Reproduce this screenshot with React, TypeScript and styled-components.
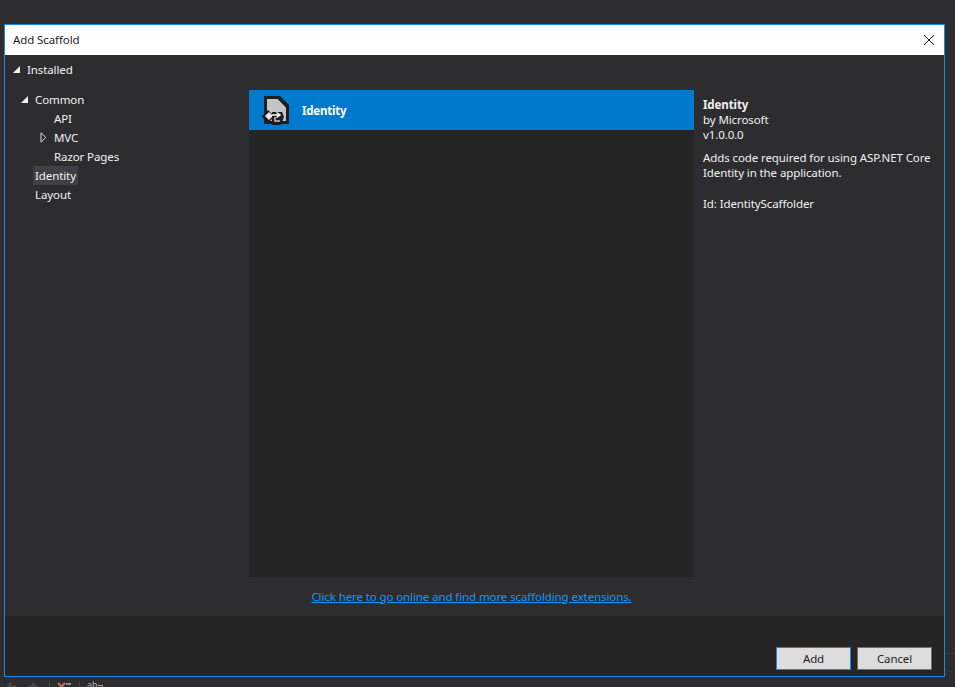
import React from "react";
import styled, { createGlobalStyle } from "styled-components";

const GlobalStyle = createGlobalStyle`
  html, body {
    margin: 0;
    padding: 0;
    width: 955px;
    height: 687px;
    overflow: hidden;
    background: #2d2d30;
    font-family: "Noto Sans", "Open Sans", sans-serif;
    font-size: 11.5px;
    letter-spacing: -0.1px;
  }
`;

const Page = styled.div`
  width: 955px;
  height: 687px;
  display: flex;
  flex-direction: column;
  padding: 24px 0 0 4px;
  box-sizing: border-box;
`;

const TopRow = styled.div`
  display: flex;
  flex: none;
`;

const Dialog = styled.div`
  width: 941px;
  height: 653px;
  flex: none;
  box-sizing: border-box;
  border: 1px solid #1a86e8;
  display: flex;
  flex-direction: column;
  background: #2d2d30;
`;

const SideRail = styled.div`
  flex: 1;
  padding-top: 629px;
`;

const RailLine = styled.div`
  height: 1px;
  background: #3a3a3d;
  margin-bottom: 9px;
`;

const TitleBar = styled.div`
  height: 30px;
  flex: none;
  box-sizing: border-box;
  background: #ffffff;
  color: #1e1e1e;
  display: flex;
  align-items: center;
  justify-content: space-between;
  padding: 0 10px 1px 8px;
`;

const CloseButton = styled.button`
  width: 10px;
  height: 10px;
  padding: 0;
  border: 0;
  background: none;
  display: flex;
`;

const Body = styled.div`
  height: 561px;
  flex: none;
  display: grid;
  grid-template-columns: 244px 445px 1fr;
  grid-template-rows: 1fr 39px;
`;

const TreePane = styled.div`
  grid-row: 1 / 3;
  color: #f1f1f1;
  display: flex;
  flex-direction: column;
  padding-top: 5px;
`;

const TreeRow = styled.div<{ $indent: number }>`
  height: 19px;
  line-height: 19px;
  display: flex;
  align-items: center;
  padding-left: ${(p) => p.$indent}px;
  flex: none;
`;

const RootRow = styled(TreeRow)`
  margin-bottom: 11px;
`;

const Arrow = styled.svg<{ $wide?: boolean }>`
  width: 7px;
  height: ${(p) => (p.$wide ? 11 : 7)}px;
  flex: none;
  margin-right: 7px;
`;

const TreeLabel = styled.span<{ $selected?: boolean }>`
  padding: 0 2px;
  margin-left: -2px;
  background: ${(p) => (p.$selected ? "#3f3f46" : "transparent")};
`;

const ListPane = styled.div`
  margin-top: 35px;
  background: #252526;
`;

const ListItem = styled.div`
  height: 40px;
  background: #007acc;
  color: #ffffff;
  font-weight: 700;
  letter-spacing: -0.2px;
  display: flex;
  align-items: center;
  gap: 12px;
  padding-left: 12px;
`;

const DetailPane = styled.div`
  grid-row: 1 / 3;
  padding: 42px 8px 0 9px;
  color: #f1f1f1;
  line-height: 15px;
`;

const DetailName = styled.div`
  font-weight: 700;
`;

const DetailText = styled.p`
  margin: 8px 0 16px;
`;

const LinkRow = styled.div`
  grid-column: 2;
  grid-row: 2;
  display: flex;
  align-items: center;
  justify-content: center;
  padding-bottom: 1px;
`;

const OnlineLink = styled.a`
  color: #0e97ff;
  text-decoration: underline;
`;

const Footer = styled.div`
  flex: 1;
  background: #252526;
  display: flex;
  justify-content: flex-end;
  align-items: flex-end;
  gap: 6px;
  padding: 0 12px 6px 0;
`;

const ActionButton = styled.button<{ $primary?: boolean }>`
  width: 75px;
  height: 23px;
  box-sizing: border-box;
  background: #dddddd;
  color: #1e1e1e;
  border: 1px solid ${(p) => (p.$primary ? "#1a86e8" : "#707070")};
  font: inherit;
  letter-spacing: inherit;
  padding: 0;
`;

const StatusBar = styled.div`
  flex: 1;
  background: #2d2d30;
  display: flex;
  align-items: flex-start;
  padding: 4px 0 0 2px;
  overflow: hidden;
`;

const Faint = styled.svg<{ $gap: number }>`
  flex: none;
  margin-right: ${(p) => p.$gap}px;
`;

const BarLabel = styled.span`
  color: #b0b0b0;
  font-size: 9px;
  line-height: 6px;
  margin: 0 1px 0 7px;
`;

const OpenArrow = () => (
  <Arrow viewBox="0 0 7 7">
    <path d="M7 0V7H0Z" fill="#f1f1f1" />
  </Arrow>
);

const ClosedArrow = () => (
  <Arrow $wide viewBox="0 0 7 11">
    <path d="M1 .8L5.800 5.500 1 10.200Z" fill="none" stroke="#d8d8d8" />
  </Arrow>
);

const ScaffoldIcon = () => (
  <svg width="29" height="31" viewBox="0 0 29 31">
    <path d="M3 1H19L28 10V29H3Z" fill="#1e1e1e" />
    <path d="M6 4H17.500L25 11.500V26H6Z" fill="#c4c4c4" />
    <path d="M17 3L26 12" fill="none" stroke="#1e1e1e" strokeWidth="2" />
    <path d="M7 15L0.500 21.500 7 28 13.500 21.500Z" fill="#1e1e1e" />
    <path d="M8 17L4 21 8 25 12 21Z" fill="#e8e8e8" />
    <path d="M11 17H21L23 22 20 30H11Z" fill="#1e1e1e" />
    <path d="M11 20H18M15.500 17.500L19 20 15.500 22.500" fill="none" stroke="#ffffff" strokeWidth="1.500" />
    <path d="M14 22V26H19" fill="none" stroke="#c4c4c4" strokeWidth="1.500" />
  </svg>
);

const App = () => (
  <>
    <GlobalStyle />
    <Page>
      <TopRow>
        <Dialog>
          <TitleBar>
            <span>Add Scaffold</span>
            <CloseButton aria-label="Close">
              <svg width="10" height="10" viewBox="0 0 10 10">
                <path d="M0 0L10 10M10 0L0 10" stroke="#1e1e1e" strokeWidth="1" />
              </svg>
            </CloseButton>
          </TitleBar>
          <Body>
            <TreePane>
              <RootRow $indent={8}>
                <OpenArrow />
                <TreeLabel>Installed</TreeLabel>
              </RootRow>
              <TreeRow $indent={16}>
                <OpenArrow />
                <TreeLabel>Common</TreeLabel>
              </TreeRow>
              <TreeRow $indent={49}>API</TreeRow>
              <TreeRow $indent={35}>
                <ClosedArrow />
                <TreeLabel>MVC</TreeLabel>
              </TreeRow>
              <TreeRow $indent={49}>Razor Pages</TreeRow>
              <TreeRow $indent={30}>
                <TreeLabel $selected>Identity</TreeLabel>
              </TreeRow>
              <TreeRow $indent={30}>Layout</TreeRow>
            </TreePane>
            <ListPane>
              <ListItem>
                <ScaffoldIcon />
                <span>Identity</span>
              </ListItem>
            </ListPane>
            <DetailPane>
              <DetailName>Identity</DetailName>
              <div>by Microsoft</div>
              <div>v1.0.0.0</div>
              <DetailText>
                Adds code required for using ASP.NET Core Identity in the application.
              </DetailText>
              <div>Id: IdentityScaffolder</div>
            </DetailPane>
            <LinkRow>
              <OnlineLink href="#">Click here to go online and find more scaffolding extensions.</OnlineLink>
            </LinkRow>
          </Body>
          <Footer>
            <ActionButton $primary>Add</ActionButton>
            <ActionButton>Cancel</ActionButton>
          </Footer>
        </Dialog>
        <SideRail>
          <RailLine />
          <svg width="10" height="6" viewBox="0 0 10 6">
            <path d="M1 0h1v1H1zM5 2h1v1H5zM1 4h1v1H1zM8 0h1v1H8zM8 4h1v1H8z" fill="#47474a" />
          </svg>
        </SideRail>
      </TopRow>
      <StatusBar>
        <Faint $gap={12} width="10" height="9" viewBox="0 0 10 9">
          <path d="M10 4.500H2M5.500 1L2 4.500 5.500 8" fill="none" stroke="#48484a" strokeWidth="2" />
        </Faint>
        <Faint $gap={11} width="10" height="9" viewBox="0 0 10 9">
          <path d="M0 4.500H8M4.500 1L8 4.500 4.500 8" fill="none" stroke="#48484a" strokeWidth="2" />
        </Faint>
        <Faint $gap={0} width="25" height="9" viewBox="0 0 25 9">
          <path d="M.5 0V9" stroke="#48484a" />
          <path d="M9 1L16 8M16 1L9 8" stroke="#d0675a" strokeWidth="2" />
          <path d="M17 2H22M17 6H22" stroke="#a8a8a8" strokeWidth="1.500" />
        </Faint>
        <Faint $gap={0} width="6" height="9" viewBox="0 0 6 9">
          <path d="M5.500 0V9" stroke="#48484a" />
        </Faint>
        <BarLabel>ab</BarLabel>
        <Faint $gap={0} width="5" height="6" viewBox="0 0 5 6">
          <path d="M0 3.500H4.500V6" fill="none" stroke="#a8a8a8" />
        </Faint>
      </StatusBar>
    </Page>
  </>
);

export default App;
